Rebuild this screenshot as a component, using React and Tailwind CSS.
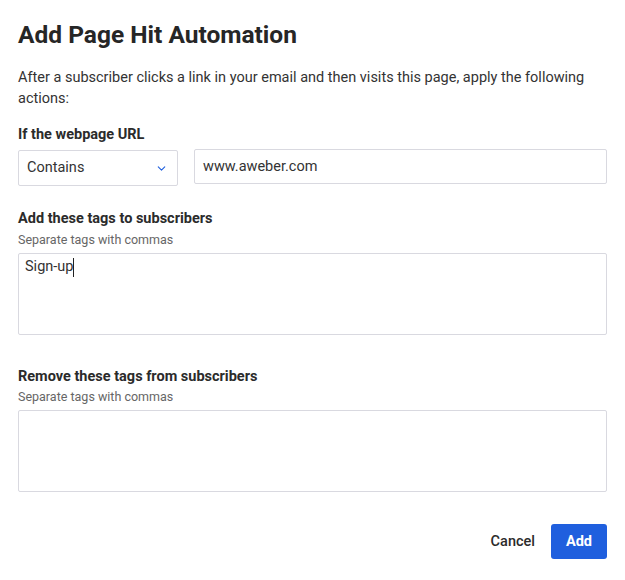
import { ChevronDown } from "lucide-react";

export default function App() {
  return (
    <div className="w-[625px] h-[580px] bg-white px-[18px] pt-[20px] text-[#2b2b2b] font-['Roboto',sans-serif]">
      <h1 className="text-[24.5px] leading-[30px] font-bold text-[#262626]">Add Page Hit Automation</h1>
      <p className="mt-[17px] text-[14.5px] leading-[21px] text-[#333]">
        After a subscriber clicks a link in your email and then visits this page, apply the following actions:
      </p>

      <div className="mt-[17px]">
        <label className="block text-[14.5px] leading-[18px] font-bold text-[#2b2b2b]">If the webpage URL</label>
        <div className="mt-[6px] flex gap-[16px]">
          <div className="w-[160px] h-[36px] border border-[#d9d9e0] rounded-[2px] flex items-center justify-between pl-[8px] pr-[9px] text-[14.5px] text-[#333]">
            <span>Contains</span>
            <ChevronDown className="w-[13px] h-[13px] text-[#1f5fde]" strokeWidth={2} />
          </div>
          <div className="flex-1 h-[35px] border border-[#d9d9e0] rounded-[2px] flex items-center px-[8px] text-[14.5px] text-[#333] -mt-[1px]">
            www.aweber.com
          </div>
        </div>
      </div>

      <div className="mt-[24px]">
        <label className="block text-[14.5px] leading-[18px] font-bold text-[#2b2b2b]">Add these tags to subscribers</label>
        <p className="mt-[4px] text-[12.5px] leading-[16px] text-[#666]">Separate tags with commas</p>
        <div className="mt-[5px] h-[82px] border border-[#d9d9e0] rounded-[2px] px-[6px] pt-[4px] text-[14.5px] leading-[18px] text-[#333] flex items-start">
          <span>Sign-up</span>
          <span className="w-[1px] h-[19px] bg-[#222]" />
        </div>
      </div>

      <div className="mt-[33px]">
        <label className="block text-[14.5px] leading-[18px] font-bold text-[#2b2b2b]">Remove these tags from subscribers</label>
        <p className="mt-[3px] text-[12.5px] leading-[16px] text-[#666]">Separate tags with commas</p>
        <div className="mt-[5px] h-[82px] border border-[#d9d9e0] rounded-[2px]" />
      </div>

      <div className="mt-[32px] flex justify-end items-center gap-[16px]">
        <button className="text-[14.5px] font-medium text-[#2b2b2b]">Cancel</button>
        <button className="w-[56px] h-[35px] bg-[#1f5fde] rounded-[3px] text-white text-[14.5px] font-bold">Add</button>
      </div>
    </div>
  );
}
